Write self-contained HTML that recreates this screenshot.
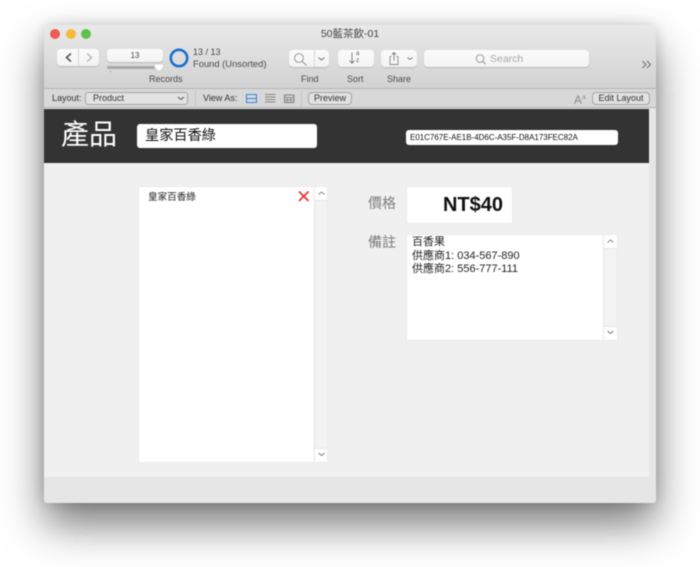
<!DOCTYPE html>
<html><head><meta charset="utf-8">
<style>
html,body{margin:0;padding:0;background:#fff}
body{width:700px;height:567px;overflow:hidden;position:relative;font-family:"Liberation Sans","Noto Sans CJK TC",sans-serif;color:#333}
#all{position:absolute;left:0;top:0;width:700px;height:567px;filter:blur(.4px)}
div,span{position:absolute;box-sizing:border-box;white-space:nowrap}
svg{position:absolute;overflow:visible}
#shadow{left:44px;top:25px;width:612px;height:478px;border-radius:5px;box-shadow:0 22px 42px rgba(0,0,0,.52),0 0 14px rgba(0,0,0,.16)}
#win{left:44px;top:25px;width:612px;height:478px;background:#e6e6e6;border-radius:5px 5px 3px 3px}
#tb{left:44px;top:25px;width:612px;height:64px;border-radius:5px 5px 0 0;background:linear-gradient(#e9e9e9,#d2d2d2);border-bottom:1px solid #b5b5b5}
#lb{left:44px;top:89px;width:612px;height:19px;background:#d8d8d8;border-bottom:1px solid #b0b0b0}
.btn{background:linear-gradient(#fbfbfb,#f3f3f3);border-radius:4px;box-shadow:0 1px 1px rgba(0,0,0,.16)}
.sep{top:0;bottom:0;width:1px;background:#d8d8d8}
.t{font-size:9px;color:#4a4a4a;line-height:11px}
.pill{border:1px solid #a4a4a4;border-radius:4px;background:#e2e2e2;font-size:9px;color:#333;text-align:center;line-height:11px}
.box{background:#fff;border:1px solid #ebebeb;border-radius:2px}
.sb{background:#f3f3f3;border-left:1px solid #e6e6e6}
.arr{background:#fff;left:0;right:0;height:14px}
</style></head><body>
<div id="all">
<div id="shadow"></div>
<div id="win"></div>
<div id="tb"></div>
<div style="left:50px;top:29px;width:10px;height:10px;border-radius:50%;background:#ee5a52"></div>
<div style="left:66px;top:29px;width:10px;height:10px;border-radius:50%;background:#f6b93b"></div>
<div style="left:81px;top:29px;width:10px;height:10px;border-radius:50%;background:#5fc04c"></div>
<div style="left:44px;top:27px;width:612px;text-align:center;font-size:10.5px;line-height:14px;color:#444">50藍茶飲-01</div>

<div class="btn" style="left:57px;top:49px;width:42px;height:17px"><div class="sep" style="left:21px"></div></div>
<div class="btn" style="left:107px;top:49px;width:56px;height:13px;font-size:8px;text-align:center;line-height:13px;color:#444">13</div>
<div style="left:107px;top:66px;width:53px;height:2.5px;background:#a8a8a8;border-radius:2px"></div>
<svg style="left:153px;top:63px" width="12" height="10"><path d="M1.5 1H10.5V4.5L6 8.5L1.5 4.5Z" fill="#fff" stroke="#bbb" stroke-width=".5"/></svg>
<div style="left:110px;top:71px;width:1px;height:1px;background:#888"></div>
<div class="t" style="left:193px;top:47px">13 / 13</div>
<div class="t" style="left:193px;top:58px;font-size:9.4px">Found (Unsorted)</div>
<div class="t" style="left:149px;top:74px">Records</div>

<div class="btn" style="left:289px;top:50px;width:40px;height:17px"><div class="sep" style="left:25px"></div></div>
<div class="btn" style="left:338px;top:50px;width:36px;height:17px"></div>
<div class="btn" style="left:381px;top:50px;width:36px;height:17px"></div>
<div class="btn" style="left:424px;top:50px;width:165px;height:17px"></div>
<svg style="left:0;top:0;z-index:2" width="700" height="110" fill="none">
<path d="M71 53.5L66.5 57.5L71 61.5" stroke="#555" stroke-width="1.6"/>
<path d="M87 53.5L91.5 57.5L87 61.5" stroke="#b5b5b5" stroke-width="1.4"/>
<circle cx="179" cy="58" r="8.2" stroke="#1a6fd0" stroke-width="2.6"/>
<circle cx="299" cy="58" r="4.4" stroke="#999" stroke-width="1"/><path d="M302.2 61.3L306.5 65.5" stroke="#999" stroke-width="1.1"/>
<path d="M318.5 57.5L321.5 60L324.5 57.5" stroke="#777" stroke-width="1.1"/>
<path d="M352 52.5V63M349.5 60.5L352 63.3L354.5 60.5" stroke="#777" stroke-width=".9"/>
<path d="M394 52.5V60.5M392 54.5L394 52.5L396 54.5" stroke="#777" stroke-width=".9"/>
<path d="M391.5 56.5H390V64.5H398V56.5H396.5" stroke="#888" stroke-width=".9"/>
<path d="M407.5 57.5L410 59.5L412.5 57.5" stroke="#777" stroke-width="1"/>
<circle cx="480" cy="58.5" r="3.8" stroke="#999" stroke-width="1"/><path d="M482.8 61.3L485.5 64" stroke="#999" stroke-width="1.1"/>
<path d="M642.5 61L646 64.5L642.5 68M647 61L650.5 64.5L647 68" stroke="#666" stroke-width=".9"/>
</svg>
<div style="left:356px;top:51px;font-size:6px;line-height:7px;color:#555;z-index:3;text-align:center">a<br>z</div>
<div style="left:490px;top:52px;font-size:10.5px;line-height:14px;color:#a8a8a8;z-index:3">Search</div>
<div class="t" style="left:301px;top:74px">Find</div>
<div class="t" style="left:347px;top:74px">Sort</div>
<div class="t" style="left:387px;top:74px">Share</div>

<div id="lb"></div>
<div class="t" style="left:52px;top:93px;color:#333">Layout:</div>
<div class="pill" style="left:85px;top:92px;width:103px;height:13px;text-align:left;padding-left:7px;border-radius:3px">Product</div>
<svg style="left:0;top:0;z-index:2" width="700" height="110" fill="none">
<path d="M178 97L181 99.5L184 97" stroke="#555" stroke-width="1"/>
<rect x="246.5" y="94.5" width="10" height="8" stroke="#2f86dd"/><path d="M246.5 98.5H256.5" stroke="#2f86dd"/>
<path d="M265 94.5H275.5M265 97H275.5M265 99.5H275.5M265 102H275.5" stroke="#888" stroke-width=".9"/>
<rect x="284.5" y="95" width="9.5" height="7.5" stroke="#777" stroke-width=".9"/><path d="M284.5 97.5H294M284.5 100H294M287.5 97.5V102.5M290.8 97.5V102.5" stroke="#777" stroke-width=".7"/>
</svg>
<div style="left:195px;top:91px;width:1px;height:15px;background:#c2c2c2"></div>
<div class="t" style="left:203px;top:93px;color:#333">View As:</div>
<div style="left:301px;top:91px;width:1px;height:15px;background:#c2c2c2"></div>
<div class="pill" style="left:308px;top:92px;width:44px;height:13px">Preview</div>
<div style="left:574px;top:90px;font-size:12px;line-height:16px;color:#8a8a8a">A<span style="position:static;font-size:6.5px;vertical-align:5px">a</span></div>
<div class="pill" style="left:592px;top:92px;width:58px;height:13px">Edit Layout</div>

<div style="left:44px;top:109px;width:605px;height:368px;background:#f0f0f0"></div>
<div style="left:44px;top:109px;width:605px;height:54px;background:#333"></div>
<div style="left:61px;top:117px;font-size:28px;line-height:36px;color:#fff">產品</div>
<div style="left:137px;top:124px;width:180px;height:24px;background:#fff;border-radius:3px;font-size:14.2px;line-height:24px;padding-left:8px;color:#111">皇家百香綠</div>
<div style="left:406px;top:130px;width:212px;height:15px;background:#fff;border-radius:3px;font-size:8px;line-height:15px;padding-left:4px;color:#111;letter-spacing:-.02px">E01C767E-AE1B-4D6C-A35F-D8A173FEC82A</div>

<div class="box" style="left:138px;top:186px;width:190px;height:277px"></div>
<div style="left:148px;top:191px;font-size:9.6px;line-height:13px;color:#222">皇家百香綠</div>
<svg style="left:298px;top:191px" width="12" height="11" fill="none"><path d="M1 .5L10.5 10M10.5 .5L1 10" stroke="#e23b30" stroke-width="1.8"/></svg>
<div class="sb" style="left:314px;top:187px;width:13px;height:275px">
<div class="arr" style="top:0;border-bottom:1px solid #e6e6e6"></div>
<div class="arr" style="bottom:0;border-top:1px solid #e6e6e6"></div>
<svg style="left:3px;top:4px" width="8" height="5" fill="none"><path d="M.5 3.5L3.5 1L6.5 3.5" stroke="#888"/></svg>
<svg style="left:3px;top:265px" width="8" height="5" fill="none"><path d="M.5 1L3.5 3.5L6.5 1" stroke="#777"/></svg>
</div>

<div style="left:368px;top:194px;font-size:14px;line-height:19px;color:#7d7d7d">價格</div>
<div class="box" style="left:406px;top:186px;width:107px;height:38px;text-align:right;padding-right:9px;font-size:20px;font-weight:bold;line-height:36px;color:#111">NT$40</div>
<div style="left:368px;top:233px;font-size:14px;line-height:19px;color:#7d7d7d">備註</div>
<div class="box" style="left:406px;top:234px;width:212px;height:107px"></div>
<div style="left:412px;top:236px;font-size:11px;line-height:13.5px;color:#222">百香果<br>供應商1: 034-567-890<br>供應商2: 556-777-111</div>
<div class="sb" style="left:603px;top:235px;width:14px;height:105px">
<div class="arr" style="top:0;border-bottom:1px solid #e6e6e6"></div>
<div class="arr" style="bottom:0;border-top:1px solid #e6e6e6"></div>
<svg style="left:3px;top:4px" width="8" height="5" fill="none"><path d="M.5 3.5L3.5 1L6.5 3.5" stroke="#888"/></svg>
<svg style="left:3px;top:95px" width="8" height="5" fill="none"><path d="M.5 1L3.5 3.5L6.5 1" stroke="#777"/></svg>
</div>
</div>
</body></html>
